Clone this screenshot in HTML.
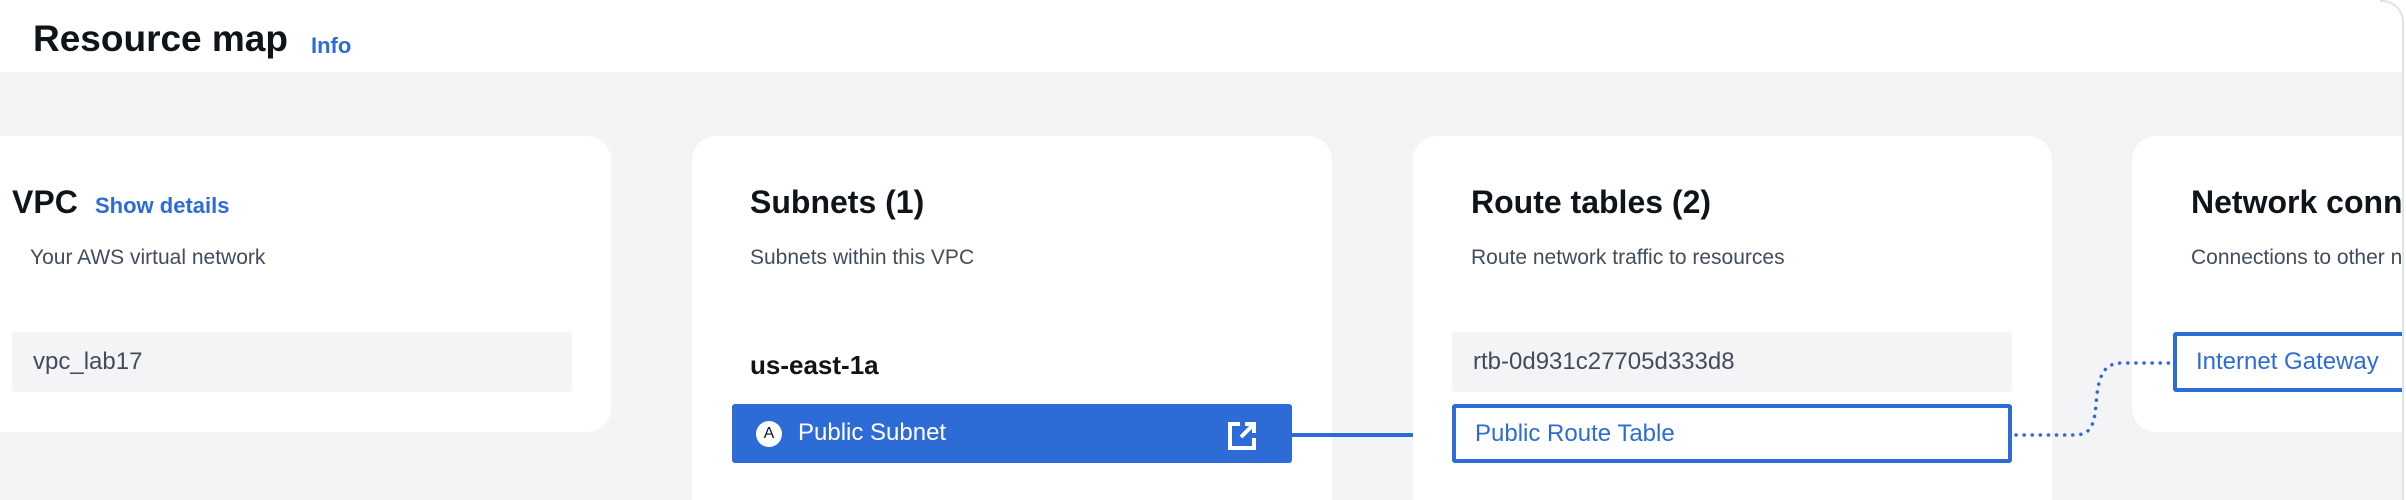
<!DOCTYPE html>
<html style="width:2406px;height:500px;overflow:hidden"><head><meta charset="utf-8"><style>
*{margin:0;padding:0;box-sizing:border-box}
body{width:2406px;height:500px;overflow:hidden;background:#fff;font-family:"Liberation Sans",sans-serif;position:relative}
.abs{position:absolute}
.gray{position:absolute;left:0;top:72px;width:2406px;height:428px;background:#f4f4f6}
.card{position:absolute;background:#fff;border-radius:24px}
.h{position:absolute;font-weight:bold;font-size:32px;color:#0f141a;white-space:nowrap}
.d{position:absolute;font-size:21px;color:#414d5c;white-space:nowrap}
.box{position:absolute;background:#f4f4f6;border-radius:4px;font-size:24px;color:#414d5c;padding-left:21px;line-height:60px;white-space:nowrap}
.link{position:absolute;border:4px solid #2d6bd6;border-radius:3px;background:#fff;color:#2d6bd6;font-size:24px;line-height:51px;padding-left:19px;white-space:nowrap;overflow:hidden}
</style></head><body>
<div class="gray"></div>
<div class="abs" style="left:33px;top:18px;font-size:37px;font-weight:bold;color:#0f141a">Resource map</div>
<div class="abs" style="left:311px;top:33px;font-size:22px;font-weight:bold;color:#2d6bd6">Info</div>

<div class="card" style="left:-30px;top:136px;width:641px;height:296px"></div>
<div class="h" style="left:12px;top:184px">VPC</div>
<div class="abs" style="left:95px;top:193px;font-size:22px;font-weight:bold;color:#2d6bd6">Show details</div>
<div class="d" style="left:30px;top:246px">Your AWS virtual network</div>
<div class="box" style="left:12px;top:332px;width:560px;height:60px">vpc_lab17</div>

<div class="card" style="left:692px;top:136px;width:640px;height:364px;border-radius:24px 24px 0 0"></div>
<div class="h" style="left:750px;top:184px">Subnets (1)</div>
<div class="d" style="left:750px;top:246px">Subnets within this VPC</div>
<div class="abs" style="left:750px;top:350px;font-size:26px;font-weight:bold;color:#0f141a">us-east-1a</div>
<div class="abs" style="left:732px;top:404px;width:560px;height:59px;background:#2d6bd6;border-radius:3px"></div>
<div class="abs" style="left:756px;top:421px;width:26px;height:26px;border-radius:50%;background:#fff;color:#0f141a;font-size:16px;text-align:center;line-height:26px">A</div>
<div class="abs" style="left:798px;top:419px;font-size:24px;color:#fff">Public Subnet</div>
<svg class="abs" style="left:1226px;top:420px" width="32" height="32" viewBox="0 0 32 32"><path d="M14 4H4v24h24V18" fill="none" stroke="#fff" stroke-width="4"/><path d="M19 4h9v9M28 4L15 17" fill="none" stroke="#fff" stroke-width="4"/></svg>
<div class="abs" style="left:1292px;top:433px;width:160px;height:4px;background:#2d6bd6"></div>

<div class="card" style="left:1413px;top:136px;width:639px;height:364px;border-radius:24px 24px 0 0"></div>
<div class="h" style="left:1471px;top:184px">Route tables (2)</div>
<div class="d" style="left:1471px;top:246px">Route network traffic to resources</div>
<div class="box" style="left:1452px;top:332px;width:560px;height:60px">rtb-0d931c27705d333d8</div>
<div class="link" style="left:1452px;top:404px;width:560px;height:59px">Public Route Table</div>

<div class="card" style="left:2132px;top:136px;width:400px;height:296px"></div>
<svg class="abs" style="left:2012px;top:355px" width="170" height="90"><path d="M4 80 H62 C78 80 82 72 84 50 C86 20 92 8 110 8 H160" fill="none" stroke="#2d6bd6" stroke-width="3.5" stroke-linecap="round" stroke-dasharray="0.1 8"/></svg>
<div class="h" style="left:2191px;top:184px">Network connections</div>
<div class="d" style="left:2191px;top:246px">Connections to other networks</div>
<div class="link" style="left:2173px;top:332px;width:300px;height:60px;line-height:52px">Internet Gateway</div>
<div class="abs" style="left:2403px;top:0;width:3px;height:500px;background:#fff"></div>
<div class="abs" style="left:2380px;top:0;width:24px;height:500px;border-right:2px solid #e0e2e6;border-top:2px solid #e0e2e6;border-top-right-radius:22px"></div>
</body></html>
